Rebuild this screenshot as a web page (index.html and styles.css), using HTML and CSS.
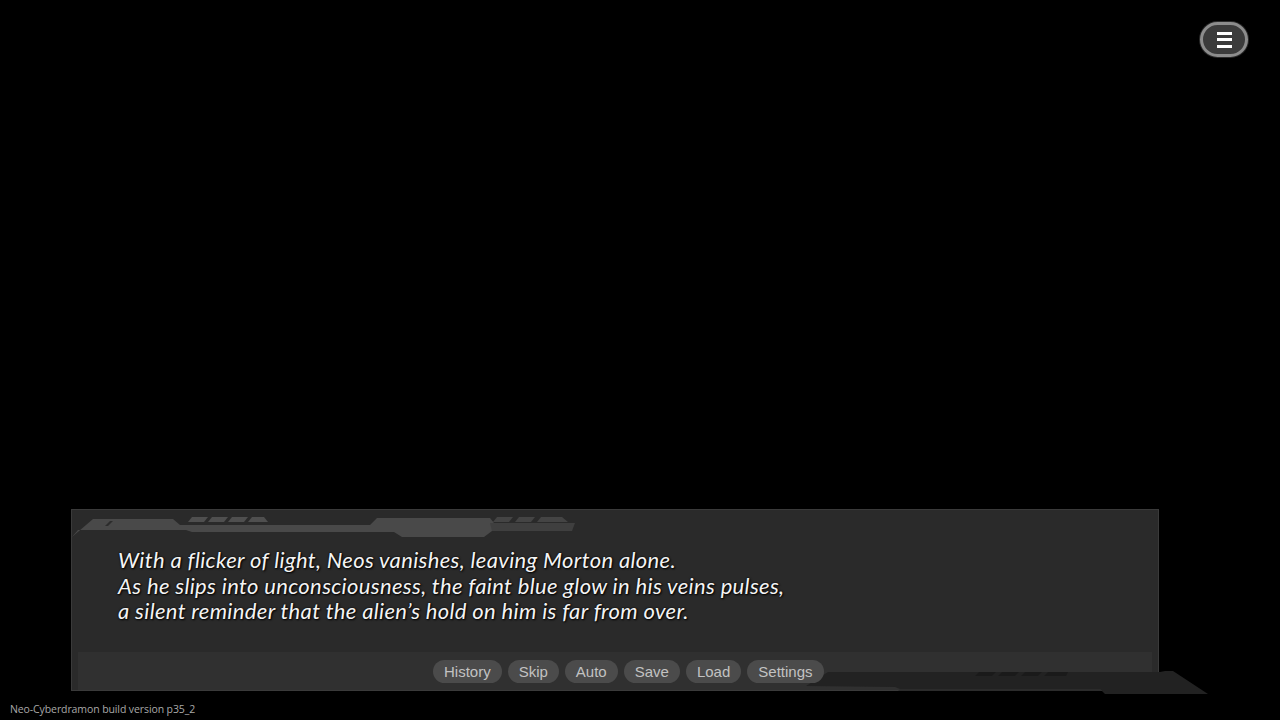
FILE: index.html
```html
<!DOCTYPE html>
<html>
<head>
<meta charset="utf-8">
<link rel="stylesheet" href="styles.css">
</head>
<body>
<div class="screen">
  <header class="topbar">
    <button class="menu-btn" aria-label="Menu">
      <span class="bar"></span><span class="bar"></span><span class="bar"></span>
    </button>
  </header>
  <main class="stage">
    <section class="dialog">
      <svg class="deco-top" width="510" height="30" viewBox="0 0 510 30">
        <polygon points="0,27 21,9 101,9 108,15 298,15 305,8 418,8 422,13 420,21 412,27 330,27 322,22 120,22 114,20 6,20" fill="#494949"/>
        <polygon points="418,13 503,13 500,21 420,21" fill="#3f3f3f"/>
        <polygon points="33,16 38,11 41,11 36,16" fill="#2c2c2c"/>
        <polygon points="116,12 120,7 136,7 132,12" fill="#4f4f4f"/>
        <polygon points="136,12 140,7 156,7 152,12" fill="#4f4f4f"/>
        <polygon points="156,12 160,7 176,7 172,12" fill="#4f4f4f"/>
        <polygon points="176,12 180,7 192,7 196,12" fill="#4f4f4f"/>
        <polygon points="421,12 425,7 441,7 437,12" fill="#444"/>
        <polygon points="443,12 447,7 463,7 459,12" fill="#444"/>
        <polygon points="465,12 469,7 490,7 496,12" fill="#444"/>
      </svg>
      <div class="text">
        <p>With a flicker of light, Neos vanishes, leaving Morton alone.</p>
        <p>As he slips into unconsciousness, the faint blue glow in his veins pulses,</p>
        <p>a silent reminder that the alien’s hold on him is far from over.</p>
      </div>
      <nav class="quick">
        <button class="pill">History</button>
        <button class="pill">Skip</button>
        <button class="pill">Auto</button>
        <button class="pill">Save</button>
        <button class="pill">Load</button>
        <button class="pill">Settings</button>
      </nav>
      <svg class="deco-bottom" width="410" height="30" viewBox="0 0 410 30">
        <polygon points="6,19 28,5 360,5 365,4 373,4 408,27 305,27 300,22 100,22 95,20" fill="#222"/>
        <polygon points="100,22 300,22 302,24 98,24" fill="#2b2b2b"/>
        <polygon points="175,9 179,5 196,5 192,9" fill="#1a1a1a"/>
        <polygon points="198,9 202,5 219,5 215,9" fill="#1a1a1a"/>
        <polygon points="221,9 225,5 242,5 238,9" fill="#1a1a1a"/>
        <polygon points="244,9 248,5 268,5 266,9" fill="#1a1a1a"/>
      </svg>
    </section>
  </main>
  <footer class="footer">
    <span class="version">Neo-Cyberdramon build version p35_2</span>
  </footer>
</div>
</body>
</html>
```

FILE: styles.css
```css
* { box-sizing: border-box; }
html, body { margin: 0; padding: 0; background: #000; }
.screen {
  width: 1280px;
  height: 720px;
  display: flex;
  flex-direction: column;
  background: #000;
  overflow: hidden;
}
.topbar {
  display: flex;
  justify-content: flex-end;
  padding: 22px 32px 0 0;
}
.menu-btn {
  width: 48px;
  height: 35px;
  border-radius: 18px;
  border: 3px solid #8c8c8c;
  background: #3b3b3b;
  display: flex;
  flex-direction: column;
  align-items: center;
  justify-content: center;
  gap: 3.5px;
  padding: 0;
  box-shadow: 0 0 0 1px #2a2a2a;
}
.menu-btn .bar {
  display: block;
  width: 15px;
  height: 3px;
  background: #fff;
}
.stage {
  flex: 1;
  display: flex;
  align-items: flex-end;
  padding-left: 71px;
}
.dialog {
  position: relative;
  width: 1088px;
  height: 182px;
  background: #2a2a2a;
  border: 1px solid #3a3a3a;
  display: flex;
  flex-direction: column;
}
.deco-top {
  position: absolute;
  left: 0;
  top: 0;
}
.deco-bottom {
  position: absolute;
  left: 728px;
  top: 157px;
  z-index: 1;
}
.text {
  flex: 1;
  padding: 37px 0 0 46px;
  font-family: "Lato", "Open Sans", sans-serif;
  font-style: italic;
  font-size: 22px;
  letter-spacing: 0.35px;
  line-height: 25.5px;
  color: #f4f4f4;
  text-shadow: 1px 1px 2px #000, 0 0 2px #000;
}
.text p { margin: 0; }
.quick {
  height: 38px;
  margin: 0 6px;
  background: #303030;
  display: flex;
  align-items: center;
  gap: 6px;
  padding-left: 355px;
}
.pill {
  position: relative;
  z-index: 2;
  height: 23px;
  padding: 0 11px;
  border: none;
  border-radius: 12px;
  background: #4b4b4b;
  color: #c2c2c2;
  font-family: "Liberation Sans", Arial, sans-serif;
  font-size: 15px;
  line-height: 23px;
}
.footer {
  height: 29px;
  padding: 8px 0 0 10px;
}
.version {
  font-family: "Open Sans", "Lato", sans-serif;
  font-size: 10.5px;
  color: #a8a8a8;
  letter-spacing: -0.1px;
}
```
